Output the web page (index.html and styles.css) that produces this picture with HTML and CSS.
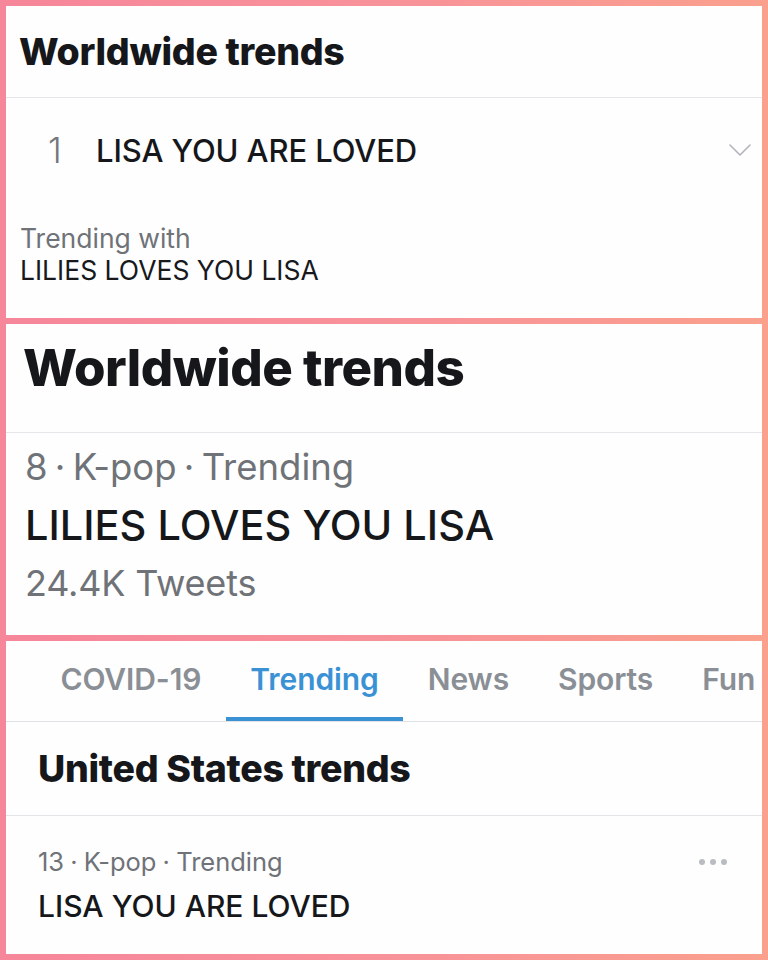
FILE: index.html
```html
<!DOCTYPE html>
<html lang="en">
<head>
<meta charset="utf-8">
<title>Trends</title>
<link rel="stylesheet" href="styles.css">
</head>
<body>
<div class="frame">
  <section class="panel panel-one">
    <header class="p1-head"><h1 class="h-title h-sm">Worldwide trends</h1></header>
    <div class="p1-row">
      <span class="rank">1</span>
      <span class="p1-name">LISA YOU ARE LOVED</span>
      <svg class="chev" width="22" height="12" viewBox="0 0 22 12"><path d="M1 1 L11 11 L21 1" fill="none" stroke="#b4b4ba" stroke-width="1.6" stroke-linecap="round" stroke-linejoin="round"/></svg>
    </div>
    <div class="p1-with">
      <div class="with-label">Trending with</div>
      <div class="with-name">LILIES LOVES YOU LISA</div>
    </div>
  </section>

  <section class="panel panel-two">
    <header class="p2-head"><h1 class="h-title h-lg">Worldwide trends</h1></header>
    <div class="p2-body">
      <div class="p2-meta">8 · K-pop · Trending</div>
      <div class="p2-name">LILIES LOVES YOU LISA</div>
      <div class="p2-count">24.4K Tweets</div>
    </div>
  </section>

  <section class="panel panel-three">
    <nav class="tabs">
      <span class="tab">COVID-19</span>
      <span class="tab active">Trending</span>
      <span class="tab">News</span>
      <span class="tab">Sports</span>
      <span class="tab">Fun</span>
    </nav>
    <header class="p3-head"><h2 class="h-title h-us">United States trends</h2></header>
    <div class="p3-trend">
      <div class="p3-text">
        <div class="p3-meta">13 · K-pop · Trending</div>
        <div class="p3-name">LISA YOU ARE LOVED</div>
      </div>
      <div class="dots"><i></i><i></i><i></i></div>
    </div>
  </section>
</div>
</body>
</html>
```

FILE: styles.css
```css
* { box-sizing: border-box; }
html, body { margin: 0; padding: 0; }
body {
  width: 768px;
  height: 960px;
  overflow: hidden;
  background: linear-gradient(90deg, #f6869a 0%, #f8929a 50%, #faa08d 100%);
  font-family: "Inter", "Liberation Sans", sans-serif;
  color: #15171a;
}
.frame {
  padding: 6px;
  display: flex;
  flex-direction: column;
  gap: 6px;
}
.panel {
  background: #fefeff;
  overflow: hidden;
}
.panel-one { height: 312px; }
.panel-two { height: 311px; }
.panel-three { height: 313px; }

.h-title { margin: 0; font-weight: 800; color: #15171a; white-space: nowrap; }
.h-sm { font-size: 37.5px; letter-spacing: -0.3px; line-height: 44px; }
.h-lg { font-size: 51px; letter-spacing: -0.5px; line-height: 60px; }
.h-us { font-size: 37.5px; letter-spacing: -0.3px; line-height: 44px; }

/* panel one */
.p1-head {
  height: 92px;
  border-bottom: 1px solid #e6e6ea;
  display: flex;
  align-items: center;
  padding-left: 13px;
}
.p1-row {
  height: 104px;
  display: flex;
  align-items: center;
  padding: 0 11px 0 42px;
}
.rank {
  width: 48px;
  font-size: 35px;
  font-weight: 300;
  color: #74777c;
}
.p1-name {
  flex: 1;
  font-size: 31px;
  font-weight: 500;
  letter-spacing: -0.1px;
  white-space: nowrap;
}
.chev { display: block; }
.p1-with {
  padding: 20px 0 0 14px;
}
.with-label {
  font-size: 26.5px;
  line-height: 32px;
  color: #6f7378;
}
.with-name {
  font-size: 26.5px;
  line-height: 32px;
  color: #17191c;
}

/* panel two */
.p2-head {
  height: 109px;
  border-bottom: 1px solid #e6e6ea;
  padding: 14px 0 0 17px;
}
.p2-body {
  padding: 6px 0 0 19px;
}
.p2-meta {
  font-size: 36.5px;
  line-height: 56px;
  color: #6f7378;
  word-spacing: -3px;
}
.p2-name {
  font-size: 41.5px;
  line-height: 60px;
  font-weight: 500;
  white-space: nowrap;
}
.p2-count {
  font-size: 36px;
  line-height: 56px;
  color: #6f7378;
  letter-spacing: -0.2px;
}

/* panel three */
.tabs {
  height: 81px;
  border-bottom: 1px solid #dfe1e4;
  display: flex;
  padding-left: 30px;
  white-space: nowrap;
}
.tab {
  height: 80px;
  padding: 0 24.5px;
  display: flex;
  align-items: center;
  border-bottom: 4px solid transparent;
  font-size: 30px;
  font-weight: 600;
  letter-spacing: -0.1px;
  color: #8a8f95;
}
.tab.active {
  color: #3a92d4;
  border-bottom-color: #3a92d4;
}
.p3-head {
  height: 94px;
  border-bottom: 1px solid #e3e4e8;
  display: flex;
  align-items: center;
  padding-left: 32px;
}
.p3-trend {
  display: flex;
  justify-content: space-between;
  padding: 28px 35px 0 32px;
}
.p3-meta {
  font-size: 25.5px;
  line-height: 36px;
  color: #6f7378;
  word-spacing: -1px;
}
.p3-name {
  font-size: 30px;
  line-height: 52px;
  font-weight: 500;
  white-space: nowrap;
}
.dots {
  display: flex;
  gap: 5px;
  height: 36px;
  align-items: center;
}
.dots i {
  width: 6px;
  height: 6px;
  border-radius: 50%;
  background: #b9bcc0;
}
```
